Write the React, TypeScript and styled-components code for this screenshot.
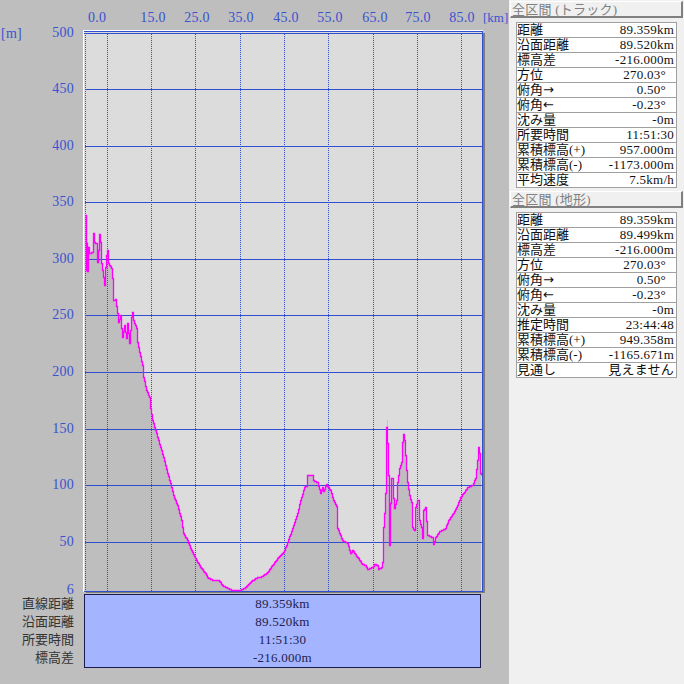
import styled, { createGlobalStyle } from 'styled-components';

const GlobalStyle = createGlobalStyle`
    html, body {
        margin: 0;
        padding: 0;
        overflow: hidden;
    }
    body {
        font-family: "Liberation Serif", "Noto Sans CJK JP", serif;
        font-size: 13px;
        letter-spacing: 0.25px;
    }
`;

const Page = styled.div`
    display: flex;
    width: 684px;
    height: 684px;
`;

const LeftPane = styled.div`
    width: 509px;
    height: 684px;
    background-color: #bebebe;
`;

const Chart = styled.svg`
    display: block;
    overflow: visible;
    text {
        font-family: "Liberation Serif", "Noto Sans CJK JP", serif;
        font-size: 14px;
        fill: #3a52cf;
    }
    text.unit {
        font-size: 13px;
        letter-spacing: 0;
    }
`;

const Summary = styled.div`
    display: grid;
    grid-template-columns: 74px 397px;
    column-gap: 10px;
`;

const SummaryLabels = styled.div`
    display: flex;
    flex-direction: column;
    padding-top: 1px;
    color: #333;
    text-align: right;
    letter-spacing: 0;
`;

const SummaryValues = styled.div`
    display: flex;
    flex-direction: column;
    height: 72px;
    border: 1px solid #1c1c4c;
    background-color: #a4b4ff;
    color: #22224f;
    text-align: center;
`;

const SummaryLine = styled.div`
    height: 18px;
    line-height: 18px;
`;

const RightPane = styled.div`
    width: 175px;
    height: 684px;
    padding: 1px 1px 0;
    box-sizing: border-box;
    background-color: #f0f0f0;
`;

const SectionHeader = styled.div`
    height: 17px;
    box-sizing: border-box;
    padding-left: 1px;
    line-height: 15px;
    color: #808080;
    background-color: #f0f0f0;
    border-top: 1px solid #fff;
    border-left: 1px solid #fff;
    border-right: 2px solid #808080;
    border-bottom: 2px solid #808080;
`;

const InfoTable = styled.div`
    width: 161px;
    margin: 4px 0 3px 6px;
    box-sizing: border-box;
    border: 1px solid #a0a0a0;
    border-bottom: 0;
    background-color: #fff;
    color: #111;
`;

const InfoRow = styled.div`
    display: flex;
    justify-content: space-between;
    height: 15px;
    box-sizing: border-box;
    padding: 0 2px 0 0;
    line-height: 14px;
    white-space: nowrap;
    border-bottom: 1px solid #a0a0a0;
`;

const InfoLabel = styled.span`
    letter-spacing: 0;
`;

const Arrow = styled.span`
    font-family: "DejaVu Sans", sans-serif;
    font-size: 13px;
`;

const InfoValue = styled.span<{ $indent?: boolean }>`
    padding-right: ${props => (props.$indent ? '8px' : '0')};
`;

interface IRow {
    label: string;
    arrow?: string;
    value: string;
    indent?: boolean;
}

const trackRows: IRow[] = [
    { label: '距離', value: '89.359km' },
    { label: '沿面距離', value: '89.520km' },
    { label: '標高差', value: '-216.000m' },
    { label: '方位', value: '270.03°', indent: true },
    { label: '俯角', arrow: '→', value: '0.50°', indent: true },
    { label: '俯角', arrow: '←', value: '-0.23°', indent: true },
    { label: '沈み量', value: '-0m' },
    { label: '所要時間', value: '11:51:30' },
    { label: '累積標高(+)', value: '957.000m' },
    { label: '累積標高(-)', value: '-1173.000m' },
    { label: '平均速度', value: '7.5km/h' },
];

const terrainRows: IRow[] = [
    { label: '距離', value: '89.359km' },
    { label: '沿面距離', value: '89.499km' },
    { label: '標高差', value: '-216.000m' },
    { label: '方位', value: '270.03°', indent: true },
    { label: '俯角', arrow: '→', value: '0.50°', indent: true },
    { label: '俯角', arrow: '←', value: '-0.23°', indent: true },
    { label: '沈み量', value: '-0m' },
    { label: '推定時間', value: '23:44:48' },
    { label: '累積標高(+)', value: '949.358m' },
    { label: '累積標高(-)', value: '-1165.671m' },
    { label: '見通し', value: '見えません' },
];

const summaryRows = [
    { label: '直線距離', value: '89.359km' },
    { label: '沿面距離', value: '89.520km' },
    { label: '所要時間', value: '11:51:30' },
    { label: '標高差', value: '-216.000m' },
];

const hLines = [
    { y: 33, label: '500' },
    { y: 89, label: '450' },
    { y: 146, label: '400' },
    { y: 202, label: '350' },
    { y: 259, label: '300' },
    { y: 315, label: '250' },
    { y: 372, label: '200' },
    { y: 429, label: '150' },
    { y: 485, label: '100' },
    { y: 542, label: '50' },
    { y: 590, label: '6' },
];

const vLines = [
    { x: 107, labelX: 97, label: '0.0' },
    { x: 151, labelX: 153, label: '15.0' },
    { x: 195, labelX: 197, label: '25.0' },
    { x: 240, labelX: 241, label: '35.0' },
    { x: 284, labelX: 286, label: '45.0' },
    { x: 328, labelX: 330, label: '55.0' },
    { x: 373, labelX: 375, label: '65.0' },
    { x: 417, labelX: 418, label: '75.0' },
    { x: 461, labelX: 462, label: '85.0' },
];

// traced from the track, x / y in chart pixels
const profile: [number, number][] = [
    [85, 215], [86, 270], [87, 242], [87, 271], [88, 247], [89, 253], [92, 252], [93, 233], [94, 242],
    [96, 243], [97, 262], [99, 238], [99, 234], [100, 242], [101, 263], [103, 277], [104, 285], [105, 267],
    [106, 255], [107, 250], [108, 263], [111, 268], [112, 278], [113, 300], [115, 299], [117, 313], [118, 322],
    [120, 315], [121, 328], [122, 337], [124, 325], [126, 338], [127, 323], [129, 343], [131, 317], [132, 312],
    [133, 320], [136, 328], [137, 342], [139, 352], [142, 365], [143, 377], [146, 390], [149, 397], [150, 408],
    [152, 420], [155, 430], [158, 440], [160, 447], [163, 457], [165, 465], [167, 473], [170, 483], [173, 495],
    [177, 505], [181, 520], [183, 533], [187, 540], [190, 548], [195, 558], [200, 567], [205, 573], [207, 577],
    [213, 580], [218, 580], [223, 586], [232, 590], [240, 590], [245, 587], [250, 582], [255, 578], [262, 576],
    [267, 572], [272, 565], [278, 557], [283, 552], [287, 542], [292, 528], [297, 513], [300, 500], [304, 487],
    [307, 485], [307, 475], [312, 475], [313, 480], [317, 482], [320, 493], [322, 487], [323, 491], [326, 484],
    [330, 490], [333, 500], [337, 508], [337, 528], [342, 540], [347, 543], [350, 553], [352, 550], [357, 557],
    [360, 561], [362, 564], [365, 565], [367, 569], [372, 567], [374, 564], [377, 565], [378, 569], [381, 567],
    [382, 562], [383, 527], [384, 513], [385, 493], [386, 427], [387, 443], [388, 475], [389, 510], [389, 545],
    [390, 503], [391, 478], [392, 478], [393, 498], [394, 508], [396, 500], [397, 482], [399, 468], [401, 462],
    [402, 442], [403, 434], [404, 440], [405, 455], [406, 470], [407, 482], [409, 495], [411, 502], [412, 527],
    [414, 530], [415, 507], [417, 500], [418, 500], [419, 520], [421, 527], [422, 538], [423, 510], [425, 507],
    [427, 535], [432, 537], [433, 544], [435, 537], [439, 531], [445, 528], [448, 520], [453, 513], [457, 505],
    [460, 497], [463, 493], [467, 487], [472, 485], [475, 478], [477, 460], [478, 447], [479, 453], [480, 473],
    [481, 475],
];

// stairs per pixel column like the original plot
const stepPath = profile.reduce((d, [x, y], i) => {
    if (i === 0) return `M${x} ${y}`;
    const [px, py] = profile[i - 1];
    let out = d;
    for (let cx = px + 1; cx <= x; cx++) {
        const cy = Math.round(py + ((y - py) * (cx - px)) / (x - px));
        out += `H${cx}V${cy}`;
    }
    return x === px ? `${out}V${y}` : out;
}, '');

function ProfileChart() {
    return (
        <Chart width={509} height={594} viewBox="0 0 509 594">
            <rect x={483} y={33} width={2} height={560} fill="#7c7c7c" />
            <rect x={86} y={592} width={399} height={1} fill="#7c7c7c" />
            <rect x={83} y={30} width={400} height={562} fill="#fff" />
            <rect x={84} y={31} width={399} height={561} fill="#dcdcdc" />
            <path d={`${stepPath}V591H85Z`} fill="#bebebe" />
            <g shapeRendering="crispEdges" stroke="#2f4ed2" fill="none">
                <path d="M84 31.5H483M84 33.5H483M482.5 31V592M84 591.5H483" strokeWidth={1} />
                {hLines.slice(1, -1).map(line => (
                    <path key={line.y} d={`M85 ${line.y + 0.5}H482`} strokeWidth={1} />
                ))}
                <path d="M85.5 33V591" strokeWidth={1} strokeDasharray="1 1" />
                {vLines.map(line => (
                    <path key={line.x} d={`M${line.x + 0.5} 34V591`} strokeWidth={1} strokeDasharray="1 1" />
                ))}
            </g>
            <path d="M387.5 427V420" stroke="#c4c4c4" strokeWidth={1} shapeRendering="crispEdges" />
            <path
                d={stepPath}
                transform="translate(0.5 0.5)"
                fill="none"
                stroke="#ff00ff"
                strokeWidth={1.3}
            />
            <text x={1} y={38}>[m]</text>
            {hLines.map(line => (
                <text key={line.label} x={74} y={line.y + 4} textAnchor="end">{line.label}</text>
            ))}
            {vLines.map(line => (
                <text key={line.label} x={line.labelX} y={22} textAnchor="middle">{line.label}</text>
            ))}
            <text className="unit" x={483} y={22}>[km]</text>
        </Chart>
    );
}

function Info({ rows }: { rows: IRow[] }) {
    return (
        <InfoTable>
            {rows.map(row => (
                <InfoRow key={row.label + (row.arrow ?? '')}>
                    <InfoLabel>
                        {row.label}
                        {row.arrow && <Arrow>{row.arrow}</Arrow>}
                    </InfoLabel>
                    <InfoValue $indent={row.indent}>{row.value}</InfoValue>
                </InfoRow>
            ))}
        </InfoTable>
    );
}

function App() {
    return (
        <Page>
            <GlobalStyle />
            <LeftPane>
                <ProfileChart />
                <Summary>
                    <SummaryLabels>
                        {summaryRows.map(row => (
                            <SummaryLine key={row.label}>{row.label}</SummaryLine>
                        ))}
                    </SummaryLabels>
                    <SummaryValues>
                        {summaryRows.map(row => (
                            <SummaryLine key={row.label}>{row.value}</SummaryLine>
                        ))}
                    </SummaryValues>
                </Summary>
            </LeftPane>
            <RightPane>
                <SectionHeader>全区間 (トラック)</SectionHeader>
                <Info rows={trackRows} />
                <SectionHeader>全区間 (地形)</SectionHeader>
                <Info rows={terrainRows} />
            </RightPane>
        </Page>
    );
}

export default App;
